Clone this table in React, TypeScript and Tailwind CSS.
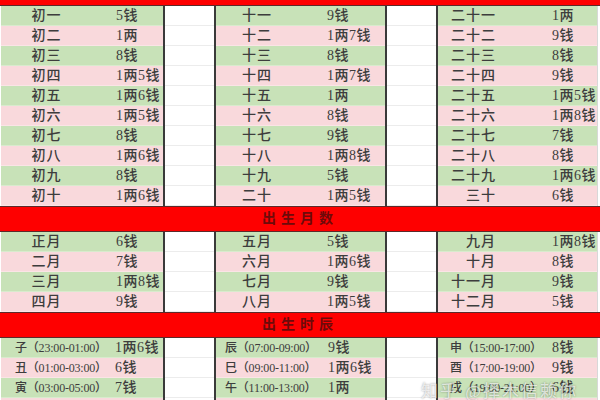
type Row = [string, string];

interface BlockStyle {
  width: string;
  name: string;
  value: string;
}

// column geometry of the three coloured blocks, per kind of section
const dayBlocks: BlockStyle[] = [
  { width: "w-[162px]", name: "w-[91px] text-center", value: "pl-[24px]" },
  { width: "w-[169px]", name: "w-[82px] text-center", value: "pl-[29px]" },
  { width: "w-[159px]", name: "w-[58px] text-right", value: "pl-[56px]" },
];

const hourBlocks: BlockStyle[] = [
  { width: "w-[162px]", name: "w-[114px] pl-[14px] text-left", value: "pl-0" },
  { width: "w-[169px]", name: "w-[112px] pl-[9px] text-left", value: "pl-0" },
  { width: "w-[159px]", name: "w-[114px] pl-[12px] text-left", value: "pl-0" },
];

const days: Row[][] = [
  [
    ["初一", "5钱"], ["初二", "1两"], ["初三", "8钱"], ["初四", "1两5钱"], ["初五", "1两6钱"],
    ["初六", "1两5钱"], ["初七", "8钱"], ["初八", "1两6钱"], ["初九", "8钱"], ["初十", "1两6钱"],
  ],
  [
    ["十一", "9钱"], ["十二", "1两7钱"], ["十三", "8钱"], ["十四", "1两7钱"], ["十五", "1两"],
    ["十六", "8钱"], ["十七", "9钱"], ["十八", "1两8钱"], ["十九", "5钱"], ["二十", "1两5钱"],
  ],
  [
    ["二十一", "1两"], ["二十二", "9钱"], ["二十三", "8钱"], ["二十四", "9钱"], ["二十五", "1两5钱"],
    ["二十六", "1两8钱"], ["二十七", "7钱"], ["二十八", "8钱"], ["二十九", "1两6钱"], ["三十", "6钱"],
  ],
];

const months: Row[][] = [
  [["正月", "6钱"], ["二月", "7钱"], ["三月", "1两8钱"], ["四月", "9钱"]],
  [["五月", "5钱"], ["六月", "1两6钱"], ["七月", "9钱"], ["八月", "1两5钱"]],
  [["九月", "1两8钱"], ["十月", "8钱"], ["十一月", "9钱"], ["十二月", "5钱"]],
];

const hours: Row[][] = [
  [["子（23:00-01:00）", "1两6钱"], ["丑（01:00-03:00）", "6钱"], ["寅（03:00-05:00）", "7钱"], ["卯（05:00-07:00）", "1两"]],
  [["辰（07:00-09:00）", "9钱"], ["巳（09:00-11:00）", "1两6钱"], ["午（11:00-13:00）", "1两"], ["未（13:00-15:00）", "8钱"]],
  [["申（15:00-17:00）", "8钱"], ["酉（17:00-19:00）", "9钱"], ["戌（19:00-21:00）", "6钱"], ["亥（21:00-23:00）", "6钱"]],
];

function Band({ title, className = "" }: { title: string; className?: string }) {
  return (
    <div
      className={`h-[26px] bg-[#fe0000] border-y border-[#5c2a2a] flex items-center justify-center text-[14px] font-bold tracking-[5px] text-[#6e0a0a] ${className}`}
    >
      {title}
    </div>
  );
}

function Block({ rows, style, small }: { rows: Row[]; style: BlockStyle; small?: boolean }) {
  return (
    <div className={`${style.width} flex flex-col`}>
      {rows.map(([name, value], i) => (
        <div
          key={name}
          className={`h-[20px] flex items-center border-b border-white/30 ${i % 2 === 0 ? "bg-[#c8e2b8]" : "bg-[#f9d9dc]"}`}
        >
          <span className={`${style.name} ${small ? "text-[12px] tracking-[-0.2px]" : "tracking-[1px]"} shrink-0 whitespace-nowrap`}>
            {name}
          </span>
          <span className={`${style.value} tracking-[0.5px] whitespace-nowrap`}>{value}</span>
        </div>
      ))}
    </div>
  );
}

function Gap({ count }: { count: number }) {
  return (
    <div className="w-[49px] flex flex-col bg-white">
      {Array.from({ length: count }).map((_, i) => (
        <div key={i} className="h-[20px] border-b border-[#ececec]" />
      ))}
    </div>
  );
}

function Section({ data, styles, small }: { data: Row[][]; styles: BlockStyle[]; small?: boolean }) {
  const n = data[0].length;
  return (
    <div className="flex pl-[1px]">
      <Block rows={data[0]} style={styles[0]} small={small} />
      <div className="w-[2px] bg-[#3a3a3a]" />
      <Gap count={n} />
      <div className="w-[2px] bg-[#3a3a3a]" />
      <Block rows={data[1]} style={styles[1]} small={small} />
      <div className="w-[2px] bg-[#3a3a3a]" />
      <Gap count={n} />
      <div className="w-[2px] bg-[#3a3a3a]" />
      <Block rows={data[2]} style={styles[2]} small={small} />
      <div className="flex-1 border-l border-[#d8d8d8] bg-white" />
    </div>
  );
}

export default function App() {
  return (
    <div
      className="relative w-[600px] h-[400px] overflow-hidden bg-white text-[14px] font-medium text-[#3d3d3d] leading-none"
      style={{ fontFamily: '"Liberation Serif", "Noto Sans CJK SC", serif' }}
    >
      <Band title="出生日数" className="-mt-[20px]" />
      <Section data={days} styles={dayBlocks} />
      <Band title="出生月数" />
      <Section data={months} styles={dayBlocks} />
      <Band title="出生时辰" />
      <Section data={hours} styles={hourBlocks} small />

      {/* watermark */}
      <div className="absolute left-[421px] top-[383px] text-[17px] font-normal tracking-[2px] text-white/70 [text-shadow:0_0_2px_rgba(0,0,0,0.4)] whitespace-nowrap">
        知乎 @择木信赖你
      </div>
    </div>
  );
}
